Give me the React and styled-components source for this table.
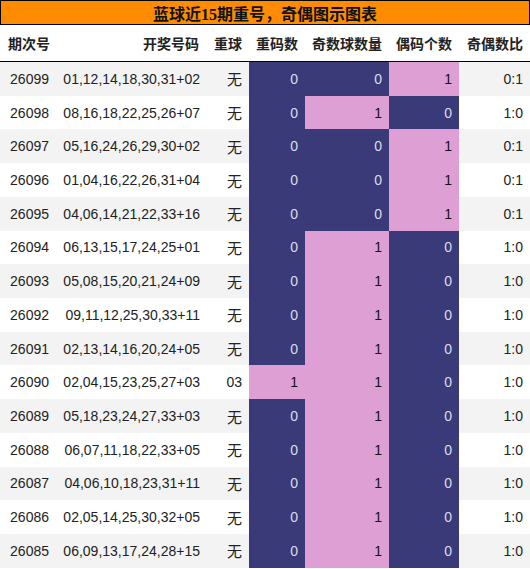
import React from 'react';
import styled, { createGlobalStyle } from 'styled-components';

const GlobalStyle = createGlobalStyle`
    html, body {
        margin: 0;
        padding: 0;
        background: #ffffff;
    }
`;

const COLS = '57px 149px 43px 56px 84px 70px 71px';

const Pagina = styled.div`
    width: 530px;
    font-family: "Liberation Sans", Arial, "Noto Sans CJK SC", sans-serif;
    color: #222222;
`;

const Titulo = styled.div`
    height: 25px;
    box-sizing: border-box;
    border: 1px solid #000000;
    background: #ff8c00;
    display: flex;
    align-items: center;
    justify-content: center;
    font-family: "Liberation Serif", "Noto Sans CJK SC", serif;
    font-weight: bold;
    font-size: 16px;
    color: #111111;
`;

const Cabecalho = styled.div`
    display: grid;
    grid-template-columns: ${COLS};
    height: 37px;
    box-sizing: border-box;
    border-bottom: 1px solid #000000;
    font-family: "Noto Sans CJK SC", sans-serif;
    font-weight: bold;
    font-size: 14px;
    color: #222222;
`;

const CelulaCab = styled.div`
    display: flex;
    align-items: center;
    justify-content: ${(p) => (p.$left ? 'flex-start' : 'flex-end')};
    padding: ${(p) => (p.$left ? '0 0 0 8px' : '0 7px 0 0')};
    white-space: nowrap;
`;

const Linha = styled.div`
    display: grid;
    grid-template-columns: ${COLS};
    height: 33.73px;
    background: ${(p) => (p.$par ? '#ffffff' : '#f3f3f3')};
    font-size: 14px;
`;

const Celula = styled.div`
    display: flex;
    align-items: center;
    justify-content: flex-end;
    padding-right: ${(p) => p.$pad || 7}px;
    white-space: nowrap;
`;

const CelulaCor = styled(Celula)`
    background: ${(p) => (p.$on ? '#dd9fd4' : '#3a3a78')};
    color: ${(p) => (p.$on ? '#111111' : '#dcdcec')};
`;

const Bola = styled.span`
    font-family: "Noto Sans CJK SC", sans-serif;
    font-size: 15px;
`;

const dados = [
    ['26099', '01,12,14,18,30,31+02', '无', 0, 0, 1, '0:1'],
    ['26098', '08,16,18,22,25,26+07', '无', 0, 1, 0, '1:0'],
    ['26097', '05,16,24,26,29,30+02', '无', 0, 0, 1, '0:1'],
    ['26096', '01,04,16,22,26,31+04', '无', 0, 0, 1, '0:1'],
    ['26095', '04,06,14,21,22,33+16', '无', 0, 0, 1, '0:1'],
    ['26094', '06,13,15,17,24,25+01', '无', 0, 1, 0, '1:0'],
    ['26093', '05,08,15,20,21,24+09', '无', 0, 1, 0, '1:0'],
    ['26092', '09,11,12,25,30,33+11', '无', 0, 1, 0, '1:0'],
    ['26091', '02,13,14,16,20,24+05', '无', 0, 1, 0, '1:0'],
    ['26090', '02,04,15,23,25,27+03', '03', 1, 1, 0, '1:0'],
    ['26089', '05,18,23,24,27,33+03', '无', 0, 1, 0, '1:0'],
    ['26088', '06,07,11,18,22,33+05', '无', 0, 1, 0, '1:0'],
    ['26087', '04,06,10,18,23,31+11', '无', 0, 1, 0, '1:0'],
    ['26086', '02,05,14,25,30,32+05', '无', 0, 1, 0, '1:0'],
    ['26085', '06,09,13,17,24,28+15', '无', 0, 1, 0, '1:0'],
];

const App = () => {
    return (
        <>
            <GlobalStyle />
            <Pagina>
                <Titulo>蓝球近15期重号，奇偶图示图表</Titulo>
                <Cabecalho>
                    <CelulaCab $left>期次号</CelulaCab>
                    <CelulaCab>开奖号码</CelulaCab>
                    <CelulaCab>重球</CelulaCab>
                    <CelulaCab>重码数</CelulaCab>
                    <CelulaCab>奇数球数量</CelulaCab>
                    <CelulaCab>偶码个数</CelulaCab>
                    <CelulaCab>奇偶数比</CelulaCab>
                </Cabecalho>
                {dados.map((d, i) => (
                    <Linha key={d[0]} $par={i % 2 === 1}>
                        <Celula $pad={8}>{d[0]}</Celula>
                        <Celula $pad={6}>{d[1]}</Celula>
                        <Celula>{d[2] === '无' ? <Bola>无</Bola> : d[2]}</Celula>
                        <CelulaCor $on={d[3] === 1}>{d[3]}</CelulaCor>
                        <CelulaCor $on={d[4] === 1}>{d[4]}</CelulaCor>
                        <CelulaCor $on={d[5] === 1}>{d[5]}</CelulaCor>
                        <Celula>{d[6]}</Celula>
                    </Linha>
                ))}
            </Pagina>
        </>
    );
};

export default App;
